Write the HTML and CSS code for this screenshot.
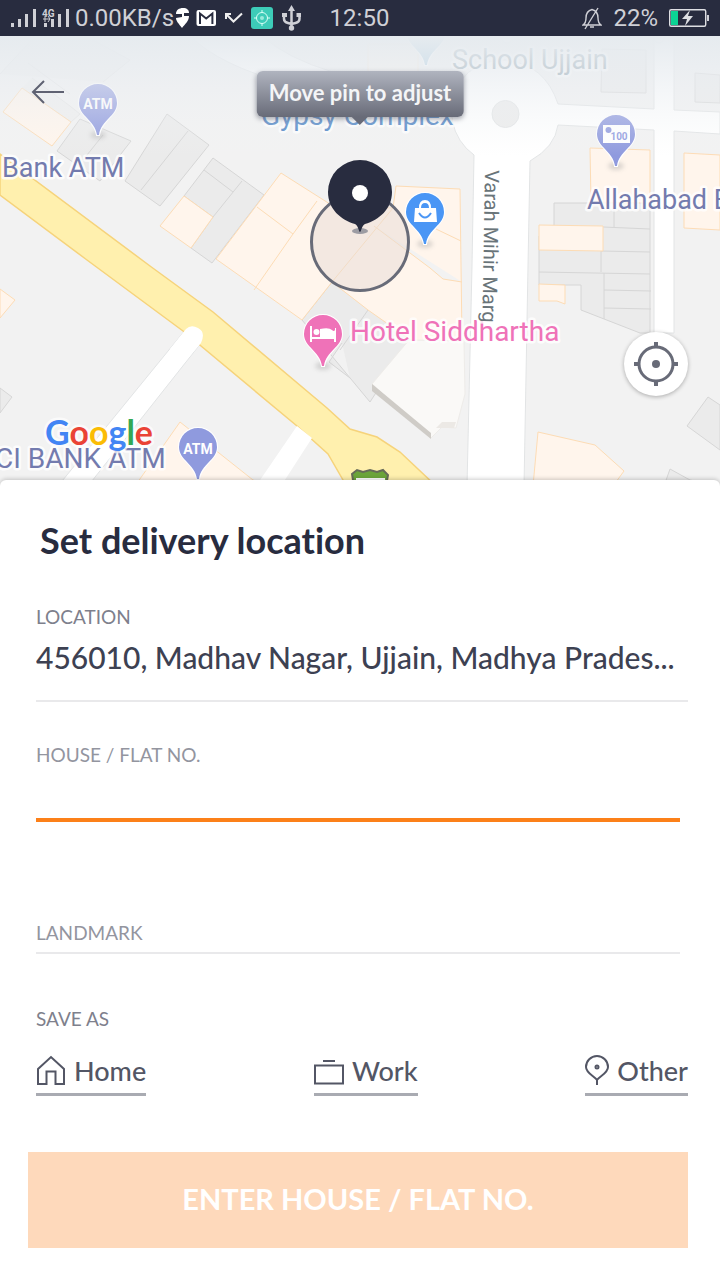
FILE: index.html
```html
<!DOCTYPE html>
<html lang="en">
<head>
<meta charset="utf-8">
<meta name="viewport" content="width=device-width, initial-scale=1">
<title>Set delivery location</title>
<link rel="stylesheet" href="styles.css">
</head>
<body>
<header class="status">
  <div class="status-left">
    <svg width="64" height="24" viewBox="10 6 64 24" fill="#cfd0d6" aria-hidden="true">
      <path d="M11 23h3v4h-3zM18 19h3v8h-3zM25 14h3v13h-3zM33 9h3v18h-3zM44 23h3v4h-3zM51 19h3v8h-3zM58 14h3v13h-3zM66 9h3v18h-3z"/>
      <path d="M43 19h7M48 16l2 3-2 3M45 16v6" stroke="#cfd0d6" fill="none"/>
      <text x="42" y="17" class="net">4G</text>
    </svg>
    <span>0.00KB/s</span>
    <svg width="126" height="28" viewBox="175 4 126 28" aria-hidden="true">
      <path d="M182 28c-3-4-6-7-6-10l6-1v-3h-6c0-4 3-6 7-6 4 0 6 2 6 5h-5v3h5c0 5-4 8-7 12z" fill="#fff"/>
      <rect x="196.500" y="10" width="19.500" height="16" rx="2" fill="#fff"/>
      <path d="M200 24V13.500l6.200 5 6.200-5V24" fill="none" stroke="#282c3f" stroke-width="2"/>
      <path d="M226 19v-5h5M226.500 14.500l7 7 8.500-8" fill="none" stroke="#eee" stroke-width="2"/>
      <rect x="251" y="7" width="22" height="22" rx="3" fill="#3dccb8"/>
      <g fill="none" stroke="#d8fff6"><circle cx="262" cy="18" r="5.500"/><path d="M262 10v3M262 23v3M254 18h3M267 18h3"/></g>
      <circle cx="262" cy="18" r="2" fill="#9cebdc"/>
      <g fill="none" stroke="#cfd0d6" stroke-width="2.500"><path d="M291.500 9v19M284 16v3q0 3 4 4l3.500 1 4-1q4-1 4-4v-4"/></g>
      <path d="M291.500 5l3.500 6h-7zM282 13h5v4h-5zM296.500 13h5v4h-5z" fill="#cfd0d6"/><circle cx="291.500" cy="28" r="2.700" fill="#cfd0d6"/>
    </svg>
  </div>
  <time class="clock">12:50</time>
  <div class="status-right">
    <svg width="20" height="24" viewBox="584 6 20 24" fill="none" stroke="#cfd0d6" stroke-width="1.400" aria-hidden="true">
      <path d="M585 25q3-2 3-7 0-7 6-8.500 6 1.500 6 8.500 0 5 3 7zM592 27h4M587 29L600 8"/>
    </svg>
    <span>22%</span>
    <svg width="40" height="20" viewBox="669 8 40 20" aria-hidden="true">
      <rect x="669.700" y="9.700" width="36" height="16.600" rx="1.500" fill="none" stroke="#dedfe3" stroke-width="1.400"/>
      <path d="M671 11h7v14h-7z" fill="#0bd494"/><path d="M707 15h2v6h-2z" fill="#cfd0d6"/>
      <path d="M690 10l-8 9h5l-2 7 8-10h-5z" fill="#dedfe3"/>
    </svg>
  </div>
</header>

<main class="screen">
  <section class="map" aria-label="Map">
    <svg class="map-art" viewBox="0 36 720 450" preserveAspectRatio="xMidYMid slice">
      <defs>
        <linearGradient id="fade" x1="0" y1="0" x2="0" y2="1">
          <stop offset="0" stop-color="#e6ebef"/><stop offset=".3" stop-color="#e9edf1" stop-opacity=".7"/><stop offset="1" stop-color="#f2f4f6" stop-opacity="0"/>
        </linearGradient>
        <path id="pin" d="M0-19a19 19 0 0 1 19 19c0 13-16 17-18 32h-2c-2-15-18-19-18-32a19 19 0 0 1 19-19z"/>
        <filter id="soft" x="-50%" y="-50%" width="200%" height="200%"><feGaussianBlur stdDeviation="2"/></filter>
      </defs>
      <rect y="36" width="720" height="450" fill="#f2f2f2"/>

      <g class="road">
        <path d="M190 36Q250 95 453 106l2-12Q310 80 262 36z"/>
        <path d="M474 155A54 54 0 0 1 460 82Q475 60 505 60 545 64 558 104L654 109V36h20v74l46 2v22l-46-3v202h-20V130l-96-5Q555 147 530 161L528 266 524 486H467L472 266z"/>
        <path d="M186 329L58 486h30L201 343Q206 332 198 328 191 324 186 329z"/>
        <circle cx="505.500" cy="114" r="13.500" fill="#ececec"/>
        <circle cx="507" cy="38" r="5"/><circle cx="659" cy="38" r="5"/>
      </g>
      <path d="M0 154L150 266 213 312 327 408 350 429 377 437 400 452 436 486H345L343 480 328 454 297 426 183 331 87 260 0 195z" fill="#fff0ae" stroke="#f6d37b" stroke-width="1.500"/>
      <path d="M297 426L312 438 281 486H256zM186 329L170 349 185 362 201 343Q206 332 198 328 191 324 186 329z" fill="#fff"/>

      <g class="block">
        <path d="M0 74L52 18 130 60 103 82M32 78L70 106 80 114 71 122 22 88M28 63L70 94" opacity=".5"/>
        <path d="M80 119L131 141 100 181 57 151zM103 135L83 160"/>
        <path d="M167 114L209 145 160 206 125 181zM188 131L141 190"/>
        <path d="M213 158L264 195 212 263 191 248 213 217 184 196zM204 170L233 192M242 181L213 217"/>
        <path d="M332 282L410 340 370 402 302 320zM342 343L329 362 350 378M368 310L340 350"/>
        <path d="M554 203H650V333L640 333 581 310V285H539V236H554zM614 203V227M603 227L650 229M601 251L650 252M601 251V272M539 272L650 274M604 273V319M604 290L651 291M604 308L651 309"/>
        <path d="M708 397L687 426 720 450V405zM670 469L664 486H720L690 480z"/>
        <path d="M602 49L646 50V93L601 92zM695 73L720 75V103L695 102z"/>
        <path d="M0 388L12 397 0 413z"/>
      </g>
      <g class="shop">
        <path d="M22 88L71 122 52 146 3 112z"/>
        <path d="M184 196L213 217 191 248 160 226z"/>
        <path d="M281 173L333 206 393 208 396 186 460 189 462 340 415 343 368 310 332 282 302 320 216 259zM317 201L293 234 257 207M293 234L254 290M393 208L332 282M374 226L430 268 443 279 462 282M436 229L461 241"/>
        <path d="M539 225L603 226V251L539 250zM539 284L565 285V304L557 301H539z"/>
        <path d="M590 148L650 150V203L591 202zM684 153L720 155V230L684 228z"/>
        <path d="M0 289L15 300 0 318z"/>
        <path d="M180 422L135 486H270L253 480z"/>
        <path d="M538 432L595 445 624 471 613 486H533z"/>
        <path d="M368 44H418V90H368z" opacity=".5"/>
      </g>
      <path d="M372 384L409 340 464 341 465 394 456 428 442 427 431 438z" fill="#faf9f7" stroke="#eeece9"/>
      <path d="M372 384L431 433V439L372 391z" fill="#cfccc7"/><path d="M442 422H456L454 428H436z" fill="#ece9e5"/>

      <g fill="#999" opacity=".35" filter="url(#soft)">
        <ellipse cx="98" cy="135" rx="8" ry="4"/><ellipse cx="425" cy="244" rx="8" ry="4"/><ellipse cx="323" cy="366" rx="8" ry="4"/><ellipse cx="616" cy="166" rx="8" ry="4"/>
      </g>
      <g class="pins">
        <use href="#pin" x="98" y="103" fill="#8f9ade"/>
        <use href="#pin" x="198" y="447" fill="#8f9ade"/>
        <use href="#pin" x="616" y="134" fill="#8f9ade"/>
        <use href="#pin" x="425" y="212" fill="#4a96f5"/>
        <use href="#pin" x="323" y="334" fill="#ef72b8"/>
        <use href="#pin" x="426" y="33" fill="#9cc4dc"/>
      </g>
      <text class="atm" x="98" y="109">ATM</text>
      <text class="atm" x="198" y="454">ATM</text>
      <path d="M603 125h27v18h-27z" fill="#fff"/><circle cx="608.500" cy="130" r="3" fill="#8f9ade"/><text class="note" x="619" y="140">100</text>
      <path d="M415 208h4q0-8 6-8t6 8h5l1 14h-23z" fill="#fff"/><path d="M421 208q0-5 4-5t4 5z" fill="#4a96f5"/><path d="M419 213q6 9 12 0" fill="none" stroke="#4a96f5" stroke-width="2"/>
      <path d="M310 326h2v11h8v-8q9-2 12 1 2 2 3 0v-2h1v14h-2v-3h-22v3h-2z" fill="#fff"/><circle cx="316.500" cy="332" r="3" fill="#fff"/>

      <g class="labels">
        <text x="2" y="177" fill="#737bae">Bank ATM</text>
        <text class="wide" x="-5" y="468" fill="#737bae">CI BANK ATM</text>
        <text x="587" y="209" fill="#737bae">Allahabad Bank</text>
        <text class="wide" x="350" y="341" fill="#ef72b8">Hotel Siddhartha</text>
        <text x="452" y="69" fill="#7a919e">School Ujjain</text>
        <text class="wide" x="261" y="125" fill="#4a82c4">Gypsy Complex</text>
        <text class="street" transform="translate(485 170) rotate(91)">Varah Mihir Marg</text>
      </g>
      <path d="M352 474l5-4 6 2 7-2 7 2 6-2 5 5-2 11h-32z" fill="#6ba43a" stroke="#666a58" stroke-width="2"/><path d="M356 478h29v8h-29z" fill="#fff"/>
      <text class="google halo" x="45" y="445" aria-hidden="true"><tspan fill="#4285f4">G</tspan><tspan fill="#ea4335">o</tspan><tspan fill="#fbbc05">o</tspan><tspan fill="#4285f4">g</tspan><tspan fill="#34a853">l</tspan><tspan fill="#ea4335">e</tspan></text>
      <rect y="36" width="720" height="120" fill="url(#fade)"/>

      <circle cx="360" cy="242" r="48.500" fill="#e8dcd5" fill-opacity=".5" stroke="#686b78" stroke-width="3"/>
      <ellipse cx="360" cy="231" rx="8" ry="3" fill="#868894" opacity=".8"/>
      <path d="M360 160a32 32 0 0 1 32 32c0 17-13 28-27 32-3 1-4 8-5 8s-2-7-5-8c-14-4-27-15-27-32a32 32 0 0 1 32-32z" fill="#282c3f"/>
      <circle cx="360" cy="193" r="8" fill="#fff"/>
    </svg>
    <button class="back" type="button" aria-label="Back">
      <svg width="34" height="26" viewBox="0 0 34 26" fill="none" stroke="#5f6272" stroke-width="2"><path d="M33 13H2M13 2L2 13l11 11"/></svg>
    </button>
    <div class="tip" role="tooltip">Move pin to adjust</div>
    <button class="locate" type="button" aria-label="Use current location">
      <svg width="44" height="44" viewBox="0 0 44 44" fill="none" stroke="#686b78"><circle cx="22" cy="22" r="17" stroke-width="3"/><path d="M22 0v6M22 38v6M0 22h6M38 22h6" stroke-width="4"/><circle cx="22" cy="22" r="4" fill="#686b78" stroke="none"/></svg>
    </button>
  </section>

  <form class="sheet">
    <h1 class="title">Set delivery location</h1>
    <div class="field">
      <label class="caption" for="location">LOCATION</label>
      <input class="box address" id="location" value="456010, Madhav Nagar, Ujjain, Madhya Prades..." readonly>
    </div>
    <div class="field house">
      <label class="caption pale" for="house">HOUSE / FLAT NO.</label>
      <input class="box active" id="house">
    </div>
    <div class="field landmark">
      <input class="box small" id="landmark" placeholder="LANDMARK" aria-label="Landmark">
    </div>
    <div class="save" role="group" aria-labelledby="save-as">
      <span class="caption" id="save-as">SAVE AS</span>
      <div class="tags">
        <button class="tag" type="button"><svg width="30" height="32" viewBox="0 0 30 32"><path d="M2 14L15 2l13 12v15h-8.500V16.500h-9V29H2z"/></svg>Home</button>
        <button class="tag" type="button"><svg width="30" height="32" viewBox="0 0 30 32"><path d="M1 10.500h28v18H1zM9 6h12"/></svg>Work</button>
        <button class="tag" type="button"><svg width="24" height="32" viewBox="0 0 24 32"><path d="M12 30v-5C9 21 1 18 1 12a11 11 0 0 1 22 0c0 6-8 9-11 13"/><circle cx="12" cy="12" r="1.500"/></svg>Other</button>
      </div>
    </div>
    <button class="submit" type="submit">ENTER HOUSE / FLAT NO.</button>
  </form>
</main>
</body>
</html>
```
FILE: styles.css
```css
* { box-sizing: border-box; }
body {
  margin: 0;
  min-height: 100vh;
  display: flex;
  flex-direction: column;
  background: #fff;
  font-family: Lato, "Open Sans", sans-serif;
  font-variant-ligatures: none;
  color: #282c3f;
}
svg { display: block; flex: none; }
button, input { font-family: inherit; }
button { border: 0; background: none; padding: 0; cursor: pointer; }

.status {
  height: 36px;
  padding: 0 11px 0 10px;
  display: grid;
  grid-template-columns: 1fr auto 1fr;
  align-items: center;
  background: #282c3f;
  color: #cfd0d6;
  font: 24px/36px Roboto, sans-serif;
}
.status-left, .status-right { display: flex; align-items: center; }
.status-left { gap: 1px; white-space: nowrap; }
.status-right { justify-content: flex-end; gap: 11px; }
.net { font: bold 10px Roboto, sans-serif; }

.screen { flex: 1; display: flex; flex-direction: column; }
.map { position: relative; overflow: hidden; }
.map-art { width: 100%; height: auto; }
.road { fill: #fff; stroke: #e2e4e5; stroke-width: 1; }
.block { fill: #ebebeb; stroke: #d6d6d6; stroke-width: 1; }
.shop { fill: #fff5ec; stroke: #fddcb5; stroke-width: 1; }
.pins { stroke: #fff; stroke-width: 2; paint-order: stroke; }
.labels text {
  font: 27px Roboto, sans-serif;
  stroke: #fff;
  stroke-opacity: .8;
  stroke-width: 5px;
  stroke-linejoin: round;
  paint-order: stroke;
}
.labels .wide { font-size: 28px; }
.labels .street { font-size: 20px; fill: #697479; }
.atm { font: bold 14px "Liberation Sans Narrow", Roboto, sans-serif; fill: #fff; text-anchor: middle; }
.note { font: bold 10px Roboto, sans-serif; fill: #8f9ade; text-anchor: middle; }
.google {
  font: bold 34px Lato, sans-serif;
  stroke: #fff;
  stroke-opacity: .7;
  stroke-width: 5px;
  stroke-linejoin: round;
  paint-order: stroke;
}
.back { position: absolute; left: 31px; top: 43px; }
.tip {
  position: absolute;
  left: 50%;
  top: 35px;
  transform: translateX(-50%);
  padding: 0 12px 2px;
  border-radius: 6px;
  background: linear-gradient(#b0b4bf, #686b78);
  box-shadow: 0 2px 5px rgba(40, 44, 63, .4);
  color: #f4f5f7;
  font-size: 22px;
  font-weight: 700;
  line-height: 44px;
  white-space: nowrap;
}
.tip::after {
  content: "";
  position: absolute;
  left: 50%;
  top: 100%;
  margin-left: -8px;
  border: 8px solid transparent;
  border-top-color: #686b78;
}
.locate {
  position: absolute;
  right: 32px;
  bottom: 90px;
  width: 64px;
  height: 64px;
  display: grid;
  place-items: center;
  border-radius: 50%;
  background: #fff;
  box-shadow: 0 1px 4px rgba(0, 0, 0, .3);
}

.sheet {
  position: relative;
  flex: 1;
  margin-top: -6px;
  padding: 36px 32px 32px 36px;
  display: flex;
  flex-direction: column;
  border-radius: 6px 6px 0 0;
  background: #fff;
  box-shadow: 0 -1px 4px rgba(0, 0, 0, .2);
}
.title { margin: 0 0 40px 4px; font-size: 36px; line-height: 48px; }
.field { display: flex; flex-direction: column; }
.caption { font-size: 19px; line-height: 26px; color: #7e808c; }
.pale { color: #93959f; }
.box {
  width: 100%;
  border: 0;
  border-bottom: 2px solid #e9e9eb;
  border-radius: 0;
  padding: 0;
  outline: 0;
  background: none;
  color: #3d4152;
}
.address { height: 72px; padding-bottom: 16px; font-size: 30px; font-weight: 500; }
.house { margin-top: 40px; padding-right: 8px; }
.active { height: 54px; border-bottom: 4px solid #fc8019; font-size: 30px; }
.landmark { margin-top: 92px; padding-right: 8px; }
.small { height: 40px; padding-bottom: 2px; font-size: 19px; }
.small::placeholder { color: #93959f; opacity: 1; }
.save { margin-top: 52px; }
.tags { margin-top: 20px; display: flex; justify-content: space-between; }
.tag {
  display: flex;
  align-items: center;
  gap: 8px;
  height: 44px;
  padding-bottom: 4px;
  border-bottom: 3px solid #a9abb2;
  color: #535665;
  font-size: 27px;
  font-weight: 500;
}
.tag svg { fill: none; stroke: #535665; stroke-width: 2; }
.submit {
  height: 96px;
  margin: 56px 0 0 -8px;
  padding-bottom: 4px;
  background: #fed9bb;
  color: #fff;
  font-size: 29px;
  font-weight: 700;
}
```
